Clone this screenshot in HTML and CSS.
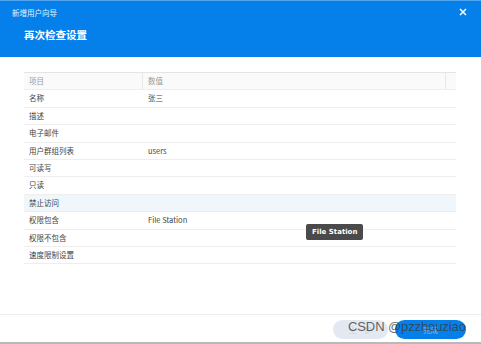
FILE: index.html
```html
<!DOCTYPE html>
<html lang="zh">
<head>
<meta charset="utf-8">
<link rel="stylesheet" href="styles.css">
</head>
<body>
<div class="win">
  <header class="head">
    <div class="topbar">
      <span class="wtitle">新增用户向导</span>
      <svg class="close" width="8" height="8" viewBox="0 0 8 8"><path d="M1 1L7 7M7 1L1 7" stroke="#fff" stroke-width="1.5"/></svg>
    </div>
    <div class="step">再次检查设置</div>
  </header>
  <main class="body">
    <div class="table">
      <div class="row th"><div class="c1">项目</div><div class="c2">数值</div><div class="c3"></div></div>
      <div class="row"><div class="c1">名称</div><div class="c2">张三</div></div>
      <div class="row"><div class="c1">描述</div><div class="c2"></div></div>
      <div class="row"><div class="c1">电子邮件</div><div class="c2"></div></div>
      <div class="row"><div class="c1">用户群组列表</div><div class="c2">users</div></div>
      <div class="row"><div class="c1">可读写</div><div class="c2"></div></div>
      <div class="row"><div class="c1">只读</div><div class="c2"></div></div>
      <div class="row hl"><div class="c1">禁止访问</div><div class="c2"></div></div>
      <div class="row"><div class="c1">权限包含</div><div class="c2">File Station</div></div>
      <div class="row"><div class="c1">权限不包含</div><div class="c2"></div></div>
      <div class="row"><div class="c1">速度限制设置</div><div class="c2"></div></div>
    </div>
    <div class="tip">File Station</div>
  </main>
  <footer class="foot">
    <button class="btn prev">上一步</button>
    <button class="btn done">完成</button>
    <span class="mark">CSDN @pzzhouziao</span>
  </footer>
</div>
</body>
</html>
```
FILE: styles.css
```css
* { box-sizing: border-box; margin: 0; padding: 0; }
html, body { width: 481px; height: 344px; overflow: hidden; background: #fff; }
body { font-family: "Noto Sans CJK SC", "Noto Sans", sans-serif; color: #444; }
.win { width: 481px; height: 344px; display: flex; flex-direction: column; border-bottom: 2px solid #b9b9b9; position: relative; }
.head { background: #0580ea; height: 57px; border-top: 1px solid #4fa3ef; color: #fff; padding: 0 12px 0 12px; }
.topbar { display: flex; justify-content: space-between; align-items: center; height: 22px; }
.wtitle { font-size: 7.5px; opacity: 0.9; }
.close { margin-right: 2px; }
.step { font-size: 10.5px; font-weight: bold; padding-left: 12px; margin-top: 5px; line-height: 14px; }
.body { flex: 1; padding: 15px 25px 0 24px; position: relative; }
.table { border-top: 1px solid #e4e4e4; }
.row { display: flex; height: 17.4px; border-bottom: 1px solid #eeeeee; font-size: 7.5px; line-height: 16.4px; color: #444; }
.row .c1 { width: 119px; padding-left: 5px; }
.row .c2 { flex: 1; padding-left: 5px; }
.th { background: #fafafa; color: #9a9a9a; }
.th .c1 { border-right: 1px solid #e8e8e8; }
.th .c2 { border-right: 1px solid #e8e8e8; }
.th .c3 { width: 10px; }
.hl { background: #eff6fc; }
.tip { position: absolute; left: 306px; top: 167px; background: #4a4a4a; color: #fff; font-family: "DejaVu Sans", sans-serif; font-weight: bold; font-size: 7px; padding: 0 6px; height: 16px; line-height: 16px; border-radius: 2px; }
.foot { height: 28px; border-top: 1px solid #ececec; display: flex; justify-content: flex-end; align-items: center; gap: 7px; padding: 2px 15px 0 0; position: relative; }
.btn { border: none; height: 19px; border-radius: 10px; font-family: "Noto Sans CJK SC", sans-serif; font-size: 7.5px; }
.prev { width: 55px; background: #e3e9f1; color: #c8ced6; }
.done { width: 71px; background: #0580ea; color: #7fb8f0; }
.mark { position: absolute; left: 348px; top: 4px; font-family: "Liberation Sans", sans-serif; font-size: 13px; color: rgba(60,60,60,0.8); white-space: nowrap; letter-spacing: -0.1px; }
```
